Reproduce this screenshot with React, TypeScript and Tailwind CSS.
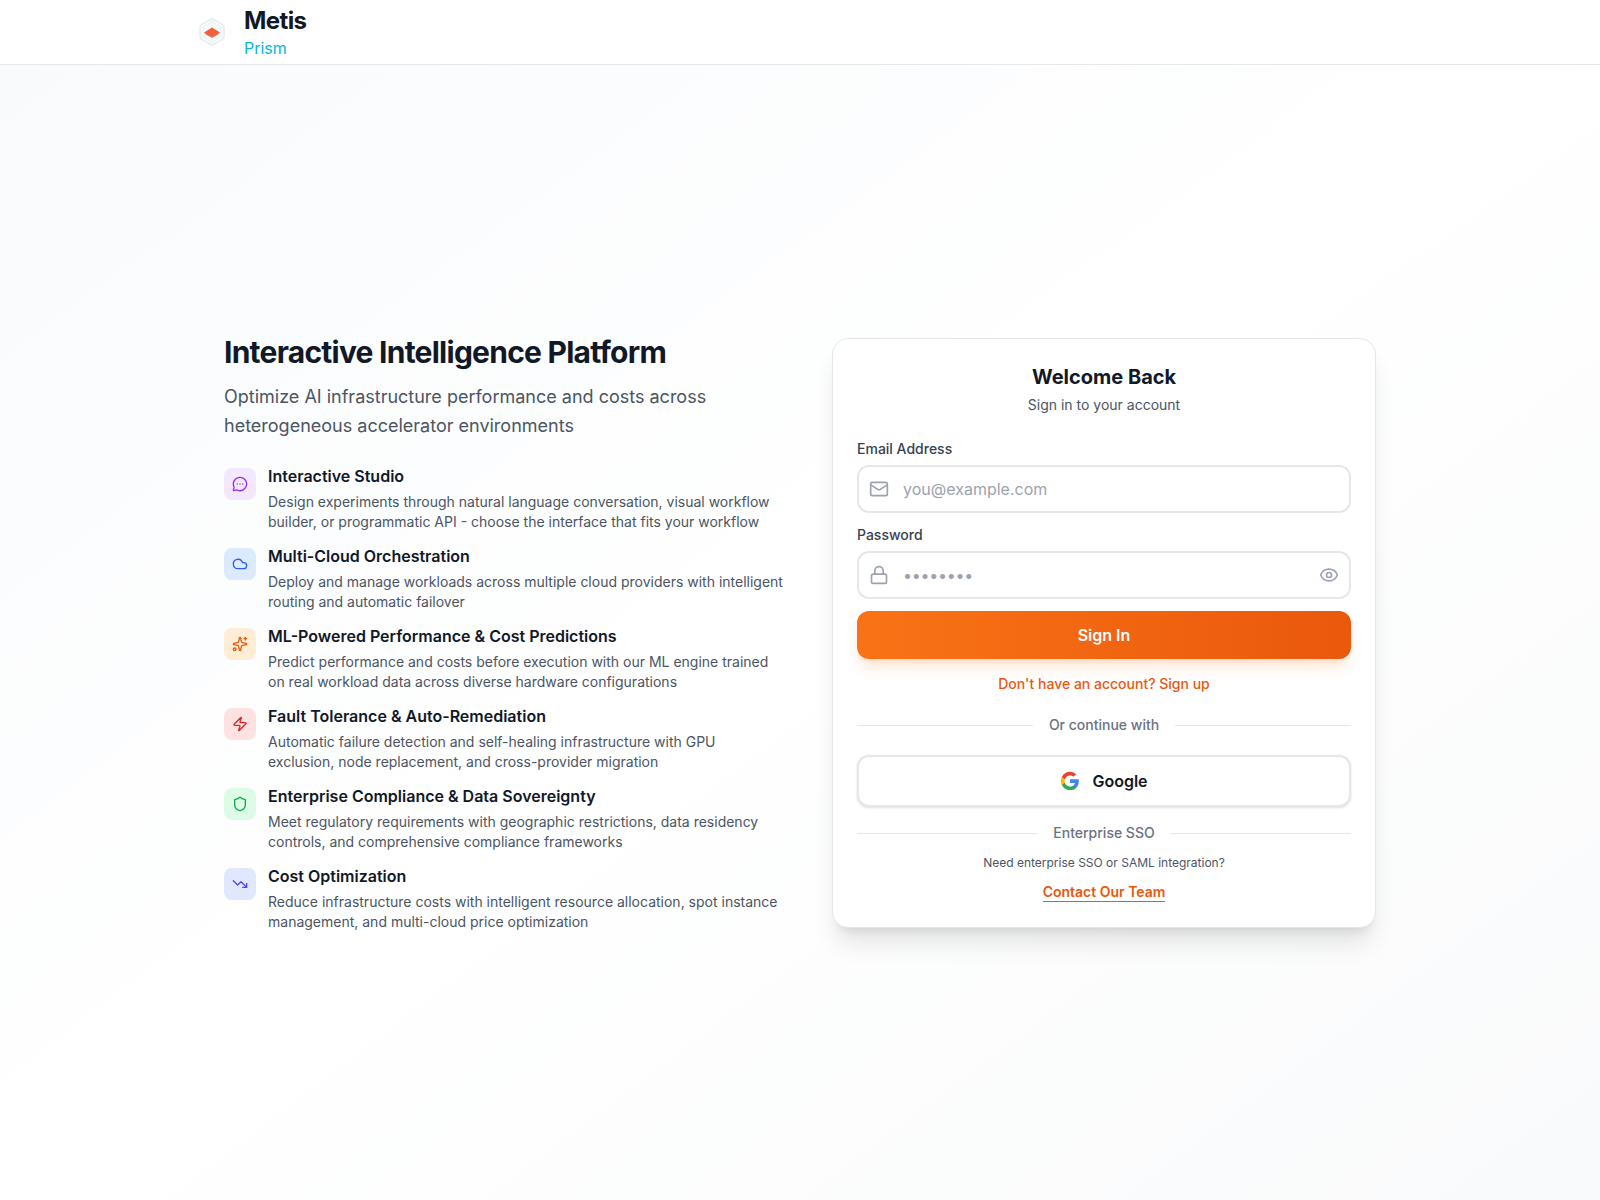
import { Mail, Lock, Eye, MessageCircleMore, Cloud, Sparkles, Zap, Shield, TrendingDown } from "lucide-react";
import type { LucideIcon } from "lucide-react";

interface Feature {
  title: string;
  body: string[];
  icon: LucideIcon;
  box: string;
  color: string;
}

const features: Feature[] = [
  {
    title: "Interactive Studio",
    body: [
      "Design experiments through natural language conversation, visual workflow",
      "builder, or programmatic API - choose the interface that fits your workflow",
    ],
    icon: MessageCircleMore,
    box: "bg-[#f3e8ff]",
    color: "text-[#9333ea]",
  },
  {
    title: "Multi-Cloud Orchestration",
    body: [
      "Deploy and manage workloads across multiple cloud providers with intelligent",
      "routing and automatic failover",
    ],
    icon: Cloud,
    box: "bg-[#dbeafe]",
    color: "text-[#2563eb]",
  },
  {
    title: "ML-Powered Performance & Cost Predictions",
    body: [
      "Predict performance and costs before execution with our ML engine trained",
      "on real workload data across diverse hardware configurations",
    ],
    icon: Sparkles,
    box: "bg-[#ffedd5]",
    color: "text-[#ea580c]",
  },
  {
    title: "Fault Tolerance & Auto-Remediation",
    body: [
      "Automatic failure detection and self-healing infrastructure with GPU",
      "exclusion, node replacement, and cross-provider migration",
    ],
    icon: Zap,
    box: "bg-[#fee2e2]",
    color: "text-[#dc2626]",
  },
  {
    title: "Enterprise Compliance & Data Sovereignty",
    body: [
      "Meet regulatory requirements with geographic restrictions, data residency",
      "controls, and comprehensive compliance frameworks",
    ],
    icon: Shield,
    box: "bg-[#dcfce7]",
    color: "text-[#16a34a]",
  },
  {
    title: "Cost Optimization",
    body: [
      "Reduce infrastructure costs with intelligent resource allocation, spot instance",
      "management, and multi-cloud price optimization",
    ],
    icon: TrendingDown,
    box: "bg-[#e0e7ff]",
    color: "text-[#4f46e5]",
  },
];

function Logo() {
  return (
    <svg viewBox="0 0 40 40" className="h-10 w-10 shrink-0">
      <path d="M20 6.500 32 13.500 32 26.500 20 33.500 8 26.500 8 13.500Z" fill="#f8fafb" stroke="#cfdfe3" strokeWidth="0.8" />
      <path d="M20 10 28.500 15 28.500 25 20 30 11.500 25 11.500 15Z" fill="none" stroke="#e3ecee" strokeWidth="0.6" />
      <path d="M20 6.500V33.500M8 13.500 32 26.500M32 13.500 8 26.500" stroke="#e3ecee" strokeWidth="0.5" />
      <path d="M20 15.500 28 20.500 20 25 12 20.500Z" fill="#f0603a" />
      <path d="M12 20.500 20 25 28 20.500 26 22.500 20 25.800 14 22.500Z" fill="#d84f2c" />
    </svg>
  );
}

function GoogleIcon() {
  return (
    <svg viewBox="0 0 24 24" className="h-5 w-5">
      <path fill="#4285F4" d="M22.56 12.25c0-.78-.07-1.530-.2-2.250H12v4.260h5.920c-.26 1.370-1.040 2.530-2.210 3.310v2.770h3.570c2.080-1.920 3.280-4.740 3.280-8.090z" />
      <path fill="#34A853" d="M12 23c2.970 0 5.460-.98 7.280-2.660l-3.570-2.770c-.98.66-2.230 1.060-3.710 1.060-2.860 0-5.290-1.930-6.160-4.530H2.180v2.840C3.990 20.530 7.700 23 12 23z" />
      <path fill="#FBBC05" d="M5.840 14.090c-.22-.66-.35-1.360-.35-2.090s.13-1.430.35-2.090V7.070H2.180C1.430 8.550 1 10.220 1 12s.43 3.450 1.180 4.930l2.850-2.220.81-.62z" />
      <path fill="#EA4335" d="M12 5.380c1.620 0 3.060.56 4.210 1.640l3.150-3.150C17.450 2.090 14.970 1 12 1 7.700 1 3.990 3.470 2.180 7.070l3.660 2.840c.87-2.600 3.300-4.530 6.160-4.530z" />
    </svg>
  );
}

export default function App() {
  return (
    <div className="flex min-h-screen flex-col bg-gradient-to-br from-[#f8fafc] via-white to-[#f9fafb] font-['Inter',sans-serif] text-[#111827]">
      {/* Header */}
      <header className="h-[65px] border-b border-[#e5e7eb] bg-white">
        <div className="mx-auto flex h-full max-w-7xl items-center gap-3 px-8">
          <Logo />
          <div>
            <div className="pt-px text-2xl leading-[31px] font-bold tracking-tight">Metis</div>
            <div className="text-base leading-6 text-[#06b6d4]">Prism</div>
          </div>
        </div>
      </header>

      <main className="flex flex-1 items-center justify-center">
        <div className="grid w-[1152px] grid-cols-[560px_544px] items-center gap-12">
          {/* Left column */}
          <div>
            <h1 className="text-3xl leading-9 font-bold tracking-tight">Interactive Intelligence Platform</h1>
            <p className="mt-3 text-lg leading-[29px] text-[#4b5563]">
              Optimize AI infrastructure performance and costs across
              <br />
              heterogeneous accelerator environments
            </p>
            <div className="mt-6 flex flex-col gap-3">
              {features.map((f) => {
                const Icon = f.icon;
                return (
                  <div key={f.title} className="flex gap-3">
                    <div className={`mt-1 flex h-8 w-8 shrink-0 items-center justify-center rounded-lg ${f.box}`}>
                      <Icon className={`h-4 w-4 ${f.color}`} />
                    </div>
                    <div>
                      <div className="mb-1 text-base leading-6 font-semibold">{f.title}</div>
                      <p className="text-sm leading-5 whitespace-nowrap text-[#4b5563]">
                        {f.body[0]}
                        <br />
                        {f.body[1]}
                      </p>
                    </div>
                  </div>
                );
              })}
            </div>
          </div>

          {/* Sign in card */}
          <div className="rounded-2xl border border-[#e5e7eb] bg-white px-6 pt-6 pb-6 shadow-xl">
            <div className="text-center">
              <h2 className="text-xl leading-7 font-bold">Welcome Back</h2>
              <p className="mt-1 text-sm leading-5 text-[#4b5563]">Sign in to your account</p>
            </div>

            <label className="mt-6 block text-sm leading-5 font-medium text-[#374151]">Email Address</label>
            <div className="mt-1.5 flex h-12 items-center gap-3.5 rounded-xl border-2 border-[#e5e7eb] px-2.5">
              <Mail className="h-5 w-5 text-[#9ca3af]" />
              <span className="text-base text-[#9ca3af]">you@example.com</span>
            </div>

            <label className="mt-3 block text-sm leading-5 font-medium text-[#374151]">Password</label>
            <div className="mt-1.5 flex h-12 items-center gap-3.5 rounded-xl border-2 border-[#e5e7eb] px-2.5">
              <Lock className="h-5 w-5 text-[#9ca3af]" />
              <span className="flex-1 text-base tracking-[-0.25px] text-[#9ca3af]">••••••••</span>
              <Eye className="h-5 w-5 text-[#9ca3af]" />
            </div>

            <button className="mt-3 h-12 w-full rounded-xl bg-gradient-to-r from-[#f97316] to-[#ea580c] text-base font-semibold text-white shadow-lg shadow-[#f97316]/20">
              Sign In
            </button>

            <p className="mt-[15px] text-center text-sm leading-5 font-medium text-[#ea580c]">Don't have an account? Sign up</p>

            <div className="mt-[21px] flex items-center gap-4">
              <div className="mt-0.5 h-px flex-1 bg-[#e5e7eb]" />
              <span className="text-sm leading-5 font-medium text-[#6b7280]">Or continue with</span>
              <div className="mt-0.5 h-px flex-1 bg-[#e5e7eb]" />
            </div>

            <button className="mt-5 flex h-[52px] w-full items-center justify-center gap-3 rounded-xl border-2 border-[#e5e7eb] bg-white text-base font-semibold shadow-sm">
              <GoogleIcon />
              Google
            </button>

            <div className="mt-4 flex items-center gap-4">
              <div className="mt-0.5 h-px flex-1 bg-[#e5e7eb]" />
              <span className="text-sm leading-5 font-medium text-[#6b7280]">Enterprise SSO</span>
              <div className="mt-0.5 h-px flex-1 bg-[#e5e7eb]" />
            </div>

            <p className="mt-3 text-center text-xs leading-4 text-[#4b5563]">Need enterprise SSO or SAML integration?</p>
            <div className="mt-2 text-center">
              <span className="border-b border-[#ea580c] pb-px text-sm leading-5 font-semibold text-[#ea580c]">Contact Our Team</span>
            </div>
          </div>
        </div>
      </main>
    </div>
  );
}
